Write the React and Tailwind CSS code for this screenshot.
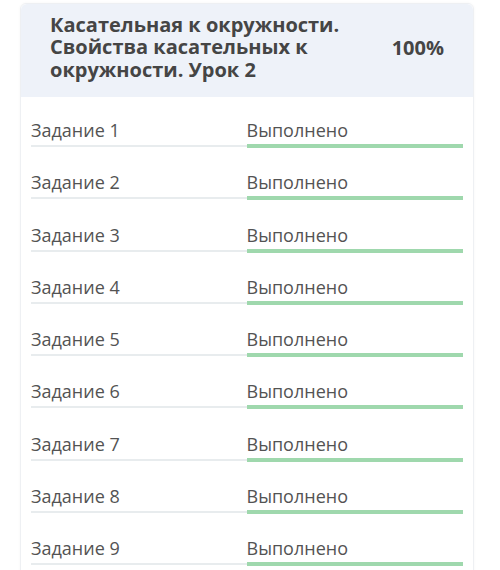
const tasks = [1, 2, 3, 4, 5, 6, 7, 8, 9]

export default function App() {
    return (
        <div className="w-[500px] h-[570px] overflow-hidden bg-white" style={{ fontFamily: '"Open Sans", sans-serif' }}>
            <div className="ml-[20px] mt-[3px] w-[454px] rounded-t-[6px] border border-[#eef0f3] shadow-[0_0_3px_rgba(0,0,0,0.04)]">
                {/* Header */}
                <div className="bg-[#eef2f9] h-[93px] flex items-center pl-[29px] pr-[29px] pb-[6px] rounded-t-[6px]">
                    <div className="w-[320px] text-[20px] leading-[22.5px] font-bold text-[#454545]">
                        Касательная к окружности. Свойства касательных к окружности. Урок 2
                    </div>
                    <div className="ml-auto text-[20px] font-bold text-[#454545]">100%</div>
                </div>

                {/* Tasks */}
                <div className="pt-[11px] px-[10px]">
                    {tasks.map((n) => (
                        <div key={n} className="h-[52.25px] flex pt-[10px]">
                            <div className="w-[216px] flex flex-col">
                                <div className="text-[18px] leading-[24px] text-[#535353]">Задание {n}</div>
                                <div className="h-[4px] mt-[2px] flex items-center">
                                    <div className="h-[2px] w-full bg-[#e8ecee]" />
                                </div>
                            </div>
                            <div className="w-[217px] flex flex-col">
                                <div className="text-[18px] leading-[24px] text-[#535353]">Выполнено</div>
                                <div className="h-[4px] mt-[2px] w-full bg-[#9fd8ad]" />
                            </div>
                        </div>
                    ))}
                </div>
            </div>
        </div>
    )
}
